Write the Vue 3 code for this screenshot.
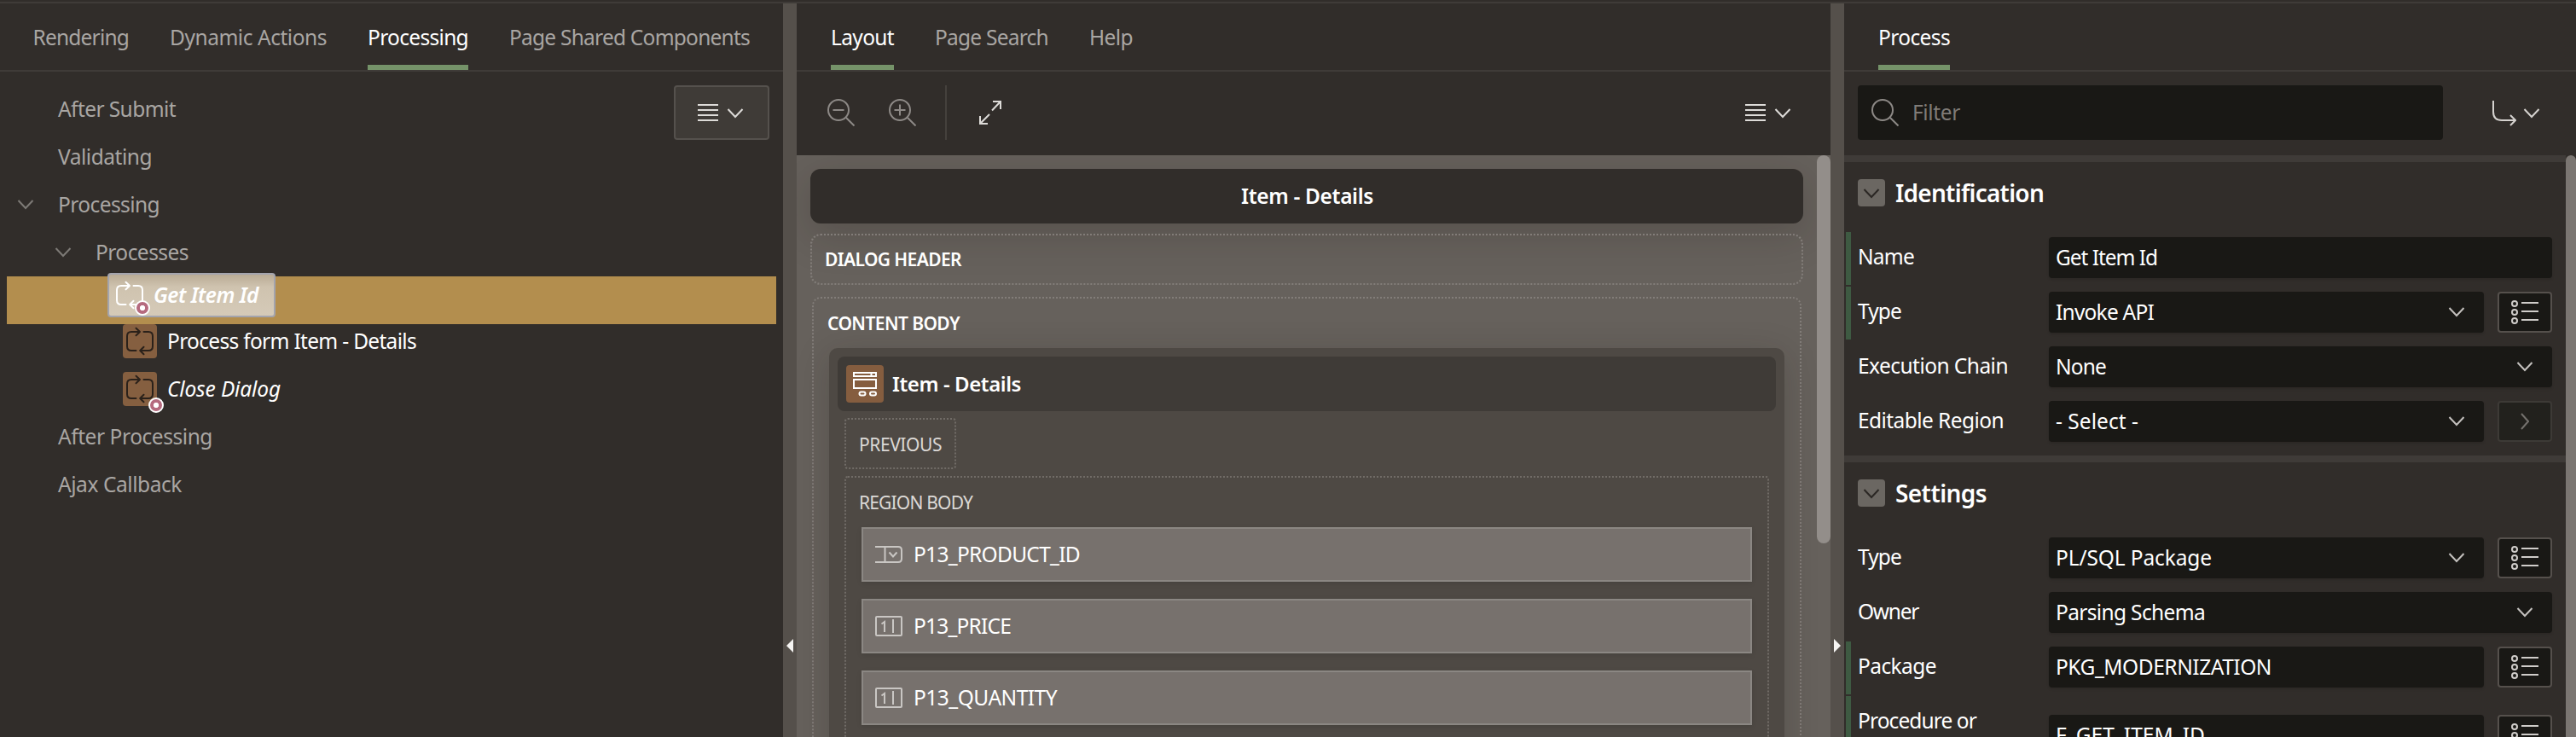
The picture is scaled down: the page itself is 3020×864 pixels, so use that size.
<script setup>
// Spreads the glyphs of a label evenly so that it fills the given width.
const vFit = {
  mounted(el, { value }) {
    if (!value) return
    const natural = el.getBoundingClientRect().width
    el.style.letterSpacing = `${(value - natural) / el.textContent.length}px`
  },
}

const leftTabs = [
  { label: 'Rendering', w: 112.5 },
  { label: 'Dynamic Actions', w: 184 },
  { label: 'Processing', w: 118, active: true },
  { label: 'Page Shared Components', w: 282 },
]
const midTabs = [
  { label: 'Layout', w: 74, active: true },
  { label: 'Page Search', w: 133 },
  { label: 'Help', w: 51 },
]
const rightTabs = [{ label: 'Process', w: 84, active: true }]

const treeTop = [
  { label: 'After Submit', w: 138, level: 'l1' },
  { label: 'Validating', w: 110, level: 'l1' },
  { label: 'Processing', w: 119, level: 'l1', open: true },
  { label: 'Processes', w: 109, level: 'l2', open: true },
]
const processes = [
  { label: 'Process form Item - Details', w: 292 },
  { label: 'Close Dialog', w: 133, italic: true, badge: true },
]
const treeBottom = [
  { label: 'After Processing', w: 181 },
  { label: 'Ajax Callback', w: 145 },
]
const items = [
  { label: 'P13_PRODUCT_ID', w: 195, kind: 'select' },
  { label: 'P13_PRICE', w: 114, kind: 'number' },
  { label: 'P13_QUANTITY', w: 168, kind: 'number' },
]
const groups = [
  {
    title: 'Identification',
    w: 174,
    rows: [
      { label: 'Name', lw: 66, value: 'Get Item Id', vw: 119, changed: true },
      { label: 'Type', lw: 51, value: 'Invoke API', vw: 115, select: true, button: 'list', changed: true },
      { label: 'Execution Chain', lw: 176, value: 'None', vw: 59, select: true },
      { label: 'Editable Region', lw: 171, value: '- Select -', vw: 97, select: true, button: 'go' },
    ],
  },
  {
    title: 'Settings',
    w: 107,
    rows: [
      { label: 'Type', lw: 51, value: 'PL/SQL Package', vw: 183, select: true, button: 'list' },
      { label: 'Owner', lw: 71, value: 'Parsing Schema', vw: 175, select: true },
      { label: 'Package', lw: 92, value: 'PKG_MODERNIZATION', vw: 253, button: 'list', changed: true },
      { label: 'Procedure or', lw: 139, value: 'F_GET_ITEM_ID', vw: 175, button: 'list', changed: true, tall: true },
    ],
  },
]
</script>

<template>
  <div class="app">
    <svg width="0" height="0" class="defs">
      <symbol id="process" viewBox="0 0 40 40">
        <g fill="none" stroke="currentColor" stroke-width="2" stroke-linecap="round" stroke-linejoin="round">
          <path d="M15.500 31H10q-5 0-5-5V14q0-5 5-5h10M15.500 4.800 20 9l-4.500 4.200" />
          <path d="M24.500 9H30q5 0 5 5v12q0 5-5 5H20.500M24.500 26.800 20.200 31l4.300 4.200" />
        </g>
      </symbol>
      <symbol id="menu" viewBox="0 0 24 20">
        <path d="M0 1h24M0 7h24M0 13h24M0 19h24" fill="none" stroke="currentColor" stroke-width="2" />
      </symbol>
      <symbol id="down" viewBox="0 0 20 12">
        <path d="M1.500 1 10 10l8.500-9" fill="none" stroke="currentColor" stroke-width="2" />
      </symbol>
    </svg>

    <section class="panel left">
      <nav class="tabs">
        <div v-for="t in leftTabs" :key="t.label" class="tab" :class="{ active: t.active }">
          <span v-fit="t.w">{{ t.label }}</span>
        </div>
      </nav>
      <div class="tree">
        <div class="menu-btn">
          <svg class="i-menu"><use href="#menu" /></svg>
          <svg class="i-down"><use href="#down" /></svg>
        </div>
        <div v-for="n in treeTop" :key="n.label" class="node" :class="n.level">
          <span class="twisty"><svg v-if="n.open" class="i-down"><use href="#down" /></svg></span>
          <span v-fit="n.w">{{ n.label }}</span>
        </div>
        <div class="node selected">
          <div class="ghost">
            <svg class="i-process"><use href="#process" /></svg>
            <b v-fit="123">Get Item Id</b>
            <i class="badge"></i>
          </div>
        </div>
        <div v-for="p in processes" :key="p.label" class="node proc" :class="{ italic: p.italic }">
          <span class="p-icon">
            <svg class="i-process"><use href="#process" /></svg>
            <i v-if="p.badge" class="badge"></i>
          </span>
          <span v-fit="p.w">{{ p.label }}</span>
        </div>
        <div v-for="n in treeBottom" :key="n.label" class="node l1">
          <span class="twisty"></span>
          <span v-fit="n.w">{{ n.label }}</span>
        </div>
      </div>
    </section>

    <div class="splitter"><svg width="8" height="16" viewBox="0 0 8 16"><path d="M8 0v16L0 8z" fill="#f5f4f2" /></svg></div>

    <section class="panel mid">
      <nav class="tabs">
        <div v-for="t in midTabs" :key="t.label" class="tab" :class="{ active: t.active }">
          <span v-fit="t.w">{{ t.label }}</span>
        </div>
      </nav>
      <div class="toolbar">
        <svg class="mag" viewBox="0 0 32 32"><path d="M6.500 13h13M22 22l9.500 9.500" /><circle cx="13" cy="13" r="12" /></svg>
        <svg class="mag" viewBox="0 0 32 32"><path d="M6.500 13h13M13 6.500v13M22 22l9.500 9.500" /><circle cx="13" cy="13" r="12" /></svg>
        <span class="divider"></span>
        <svg class="expand" viewBox="0 0 26 28">
          <path d="M16 1h9v9M25 1 15 11.500M10 27H1v-9M1 27l11-11" fill="none" stroke="currentColor" stroke-width="2" />
        </svg>
        <span class="grow"></span>
        <svg class="i-menu"><use href="#menu" /></svg>
        <svg class="i-down"><use href="#down" /></svg>
      </div>
      <div class="canvas">
        <div class="canvas-main">
          <div class="page-title"><b v-fit="155">Item - Details</b></div>
          <div class="slot dialog"><b v-fit="160">DIALOG HEADER</b></div>
          <div class="slot content">
            <b v-fit="155">CONTENT BODY</b>
            <div class="region">
              <div class="region-head">
                <svg class="form-icon" viewBox="0 0 44 44" fill="none" stroke="#fff" stroke-width="2">
                  <path d="M9 9h26v4H9zM29.500 9v4M9 17h26v10H9z" />
                  <rect x="15.500" y="31.500" width="7" height="4" rx="2" />
                  <rect x="28" y="31.500" width="7" height="4" rx="2" />
                </svg>
                <b v-fit="151">Item - Details</b>
              </div>
              <div class="slot previous"><span v-fit="97">PREVIOUS</span></div>
              <div class="slot body">
                <span v-fit="133">REGION BODY</span>
                <div v-for="it in items" :key="it.label" class="item">
                  <svg v-if="it.kind === 'select'" class="item-icon" viewBox="0 0 32 24">
                    <path d="M0 3h27q4 0 4 4v10q0 4-4 4H0M11.500 3v18M16.500 9.500l4.500 5 4.500-5" />
                  </svg>
                  <svg v-else class="item-icon" viewBox="0 0 32 24">
                    <rect x="1" y="1" width="30" height="22" rx="1" />
                    <path d="M7.500 9.500 11 7v12M21 4v16" />
                  </svg>
                  <span v-fit="it.w">{{ it.label }}</span>
                </div>
              </div>
            </div>
          </div>
        </div>
        <div class="thumb"></div>
      </div>
    </section>

    <div class="splitter"><svg width="8" height="16" viewBox="0 0 8 16"><path d="M0 0v16l8-8z" fill="#f5f4f2" /></svg></div>

    <section class="panel right">
      <nav class="tabs">
        <div v-for="t in rightTabs" :key="t.label" class="tab" :class="{ active: t.active }">
          <span v-fit="t.w">{{ t.label }}</span>
        </div>
      </nav>
      <div class="search">
        <div class="filter">
          <svg class="mag" viewBox="0 0 32 32"><path d="M22 22l9.500 9.500" /><circle cx="13" cy="13" r="12" /></svg>
          <span v-fit="56">Filter</span>
        </div>
        <svg class="goto" viewBox="0 0 28 30">
          <path d="M1 0v13q0 10 10 10h16M21 17l6 6-6 6" fill="none" stroke="currentColor" stroke-width="2" />
        </svg>
        <svg class="i-down"><use href="#down" /></svg>
      </div>
      <div class="props">
        <div class="props-main">
          <div v-for="g in groups" :key="g.title" class="group">
            <div class="group-head">
              <span class="toggle"><svg class="i-down"><use href="#down" /></svg></span>
              <b v-fit="g.w">{{ g.title }}</b>
            </div>
            <div v-for="r in g.rows" :key="r.label" class="row" :class="{ changed: r.changed, tall: r.tall }">
              <div class="label"><span v-fit="r.lw">{{ r.label }}</span></div>
              <div class="field">
                <span v-fit="r.vw">{{ r.value }}</span>
                <svg v-if="r.select" class="i-down"><use href="#down" /></svg>
              </div>
              <div v-if="r.button" class="btn" :class="r.button">
                <svg v-if="r.button === 'list'" width="32" height="28" viewBox="0 0 32 28" fill="none" stroke="currentColor" stroke-width="2">
                  <circle cx="4" cy="4" r="3" /><circle cx="4" cy="14" r="3" /><circle cx="4" cy="24" r="3" />
                  <path d="M12 3h20M12 13h20M12 23h20" />
                </svg>
                <svg v-else width="10" height="20" viewBox="0 0 10 20"><path d="M1 1l8 9-8 9" fill="none" stroke="currentColor" stroke-width="2" /></svg>
              </div>
            </div>
          </div>
        </div>
        <div class="props-thumb"></div>
      </div>
    </section>
  </div>
</template>

<style>
html,
body {
  margin: 0;
  overflow: hidden;
  background: #312d2a;
}
</style>

<style scoped>
.app {
  display: flex;
  box-sizing: border-box;
  width: 3020px;
  height: 864px;
  overflow: hidden;
  padding-top: 2px;
  background: #312d2a;
  color: #fff;
  font: 24.500px/32px 'Noto Sans', sans-serif;
  white-space: nowrap;
}
.app * { box-sizing: border-box; }
.defs { position: absolute; }
svg { display: block; flex: none; }
b { font-weight: 600; }
.panel {
  display: flex;
  flex-direction: column;
  height: 862px;
  border-top: 2px solid #3f3b38;
  overflow: hidden;
}
.left { width: 918px; }
.mid { width: 1212px; }
.right { width: 858px; }
.splitter {
  width: 16px;
  height: 862px;
  border-top: 2px solid #3f3b38;
  background: #55504b;
  padding: 745px 0 0 4px;
}
.tabs {
  display: flex;
  flex: none;
  gap: 48px;
  height: 80px;
  padding-left: 40px;
  border-bottom: 2px solid #3f3b38;
  color: #a9a6a3;
}
.left .tabs { padding-left: 38.500px; }
.tab { height: 78px; padding-top: 24px; }
.tab.active { color: #fff; border-bottom: 6px solid #759369; }
.i-menu { width: 24px; height: 20px; }
.i-down { width: 20px; height: 12px; }

.tree { position: relative; padding-top: 16px; color: #a9a6a3; }
.menu-btn {
  position: absolute;
  top: 16px;
  right: 16px;
  display: flex;
  gap: 10px;
  width: 112px;
  height: 64px;
  padding: 20px 0 0 26px;
  border: 2px solid #55514d;
  border-radius: 4px;
  background: #3f3b37;
  color: #dddbd8;
}
.menu-btn .i-down { margin-top: 5px; }
.node { display: flex; align-items: center; height: 56px; }
.l1 { padding-left: 20px; }
.l2 { padding-left: 64px; }
.twisty { width: 48px; color: #7d7a76; }
.selected { margin: 0 8px -8px; background: #b38e4e; }
.ghost {
  position: relative;
  top: -6px;
  display: flex;
  align-items: center;
  width: 197px;
  height: 52px;
  margin-left: 118px;
  padding: 0 0 1px 4px;
  border: 2px solid #a3a4ad;
  border-radius: 4px;
  background: linear-gradient(#b9ab95, #cfc3af 30%, #d5cab8);
  color: #fff;
  font-style: italic;
}
.ghost b { margin-left: 8px; }
.i-process { width: 40px; height: 40px; }
.badge {
  position: absolute;
  width: 18px;
  height: 18px;
  border: 2px solid #fff;
  border-radius: 50%;
  background: radial-gradient(circle, #fff 2.800px, #b56a7e 3.500px);
}
.ghost .badge { left: 30px; top: 30px; }
.proc { padding-left: 144px; gap: 12px; color: #fff; }
.italic { font-style: italic; }
.p-icon { position: relative; border-radius: 4px; background: #855f40; color: #2a211a; }
.p-icon .badge { left: 30px; top: 30px; }

.toolbar {
  display: flex;
  flex: none;
  height: 98px;
  padding: 32px 46px 0 36px;
}
.mag { width: 32px; height: 32px; fill: none; stroke: #8d8986; stroke-width: 2; }
.toolbar .mag { margin-right: 40px; }
.divider { width: 2px; height: 64px; margin: -16px 38px 0 -6px; background: #45413d; }
.expand { width: 26px; height: 28px; margin-top: 2px; color: #dddbd8; }
.grow { flex: 1; }
.toolbar .i-menu { margin-top: 6px; color: #dddbd8; }
.toolbar .i-down { margin: 11px 0 0 10px; color: #dddbd8; }

.canvas {
  display: flex;
  justify-content: space-between;
  height: 682px;
  background: #66615c;
  overflow: hidden;
}
.canvas-main { width: 1164px; margin: 16px 0 0 16px; }
.thumb { width: 16px; height: 455px; border-radius: 8px; background: #938e8a; }
.page-title {
  display: flex;
  justify-content: center;
  align-items: center;
  height: 64px;
  padding-left: 1px;
  border-radius: 12px;
  background: #312d2a;
  box-shadow: 0 12px 48px rgba(30, 25, 20, 0.22);
}
.slot { border: 2px dotted #827d79; font-size: 21px; line-height: 28px; }
.slot > b, .slot > span { display: inline-block; }
.dialog { height: 60px; margin-top: 12px; padding: 14px 0 0 15px; border-radius: 12px; }
.content {
  height: 700px;
  margin: 14px 2px 0;
  padding: 15px 18px 0;
  border-radius: 10px;
}
.content > b { display: block; width: max-content; margin-left: -2px; }
.region {
  height: 600px;
  margin-top: 15px;
  padding: 10px;
  border-radius: 10px;
  background: #4e4944;
  box-shadow: 0 8px 40px rgba(30, 25, 20, 0.2);
}
.region-head {
  display: flex;
  align-items: center;
  gap: 10px;
  height: 64px;
  padding-left: 10px;
  border-radius: 8px;
  background: #3f3b37;
  font-size: 24px;
}
.form-icon { width: 44px; height: 44px; border-radius: 4px; background: #855d3f; }
.region .slot { border-color: #716c67; color: #dcd9d6; }
.previous { width: 131px; height: 60px; margin: 8px 0 8px 8px; padding: 15px 0 0 15px; border-radius: 4px; }
.body { height: 500px; margin: 0 8px; padding: 15px 18px 0; border-radius: 4px; }
.body > span { display: block; width: max-content; margin: 0 0 15px -3px; }
.item {
  display: flex;
  align-items: center;
  height: 64px;
  margin-bottom: 20px;
  padding-left: 14px;
  border: 2px solid #8b8783;
  background: #77716d;
  box-shadow: 0 2px 6px rgba(0, 0, 0, 0.1);
  color: #fff;
  font-size: 24.500px;
}
.item-icon { width: 32px; height: 24px; margin-right: 13px; fill: none; stroke: #c9c6c3; stroke-width: 2; }

.search { display: flex; height: 98px; padding: 16px 0 0 16px; flex: none; color: #d5d2cf; }
.filter {
  display: flex;
  align-items: center;
  gap: 16px;
  width: 686px;
  height: 64px;
  padding-left: 16px;
  border-radius: 4px;
  background: #191815;
  color: #7f7b77;
}
.goto { width: 28px; height: 30px; margin: 18px 8px 0 58px; }
.search .i-down { margin-top: 27px; }
.props { display: flex; height: 682px; overflow: hidden; }
.props-main { width: 846px; }
.props-thumb { width: 12px; height: 700px; border-radius: 6px; background: #7b7672; }
.group { height: 352px; border-top: 8px solid #3f3b38; }
.group-head {
  display: flex;
  align-items: center;
  gap: 12px;
  height: 72px;
  margin-bottom: 10px;
  padding-left: 16px;
  font-size: 28px;
}
.toggle {
  width: 32px;
  height: 32px;
  padding: 11px 6px;
  border-radius: 4px;
  background: #6b6762;
  color: #2b2724;
}
.row {
  display: flex;
  align-items: flex-start;
  height: 62px;
  margin: 0 0 2px 2px;
  padding-top: 6px;
  border-left: 6px solid transparent;
}
.row.changed { border-left-color: #3e5a42; }
.label { width: 232px; padding: 7px 0 0 8px; }
.field {
  display: flex;
  flex: 1;
  align-items: center;
  justify-content: space-between;
  height: 48px;
  margin-right: 16px;
  padding: 0 22px 1px 8px;
  border-radius: 4px;
  background: #191815;
  box-shadow: 0 2px 3px rgba(0, 0, 0, 0.12);
}
.field .i-down { color: #c4c1be; }
.btn {
  display: flex;
  align-items: center;
  justify-content: center;
  width: 64px;
  height: 48px;
  margin-right: 16px;
  border: 2px solid #55504c;
  border-radius: 4px;
  background: #191815;
  color: #cfccc9;
}
.btn.go { border-color: #3d3a36; background: #22211d; color: #74716d; }
.row.tall { height: 92px; padding-top: 22px; }
.tall .label { margin-top: -16px; }
</style>
